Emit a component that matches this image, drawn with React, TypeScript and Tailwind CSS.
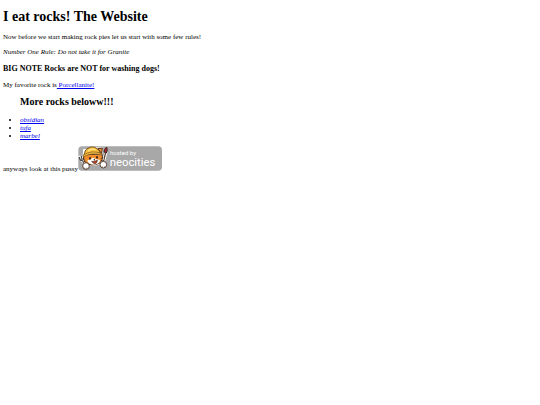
const rocks = ['obsidian', 'tufa', 'marbel']

function NeocitiesBadge() {
  return (
    <svg viewBox="0 0 252 75" className="h-[25px] w-[84px]" role="img" aria-label="hosted by neocities">
      <rect x="1" y="1" width="251" height="73" rx="11" fill="#a8a8a8" />

      {/* fork */}
      <g fill="none" strokeLinecap="round" strokeLinejoin="round">
        <path d="M5 33l5 9 8-8M12 42l10 15" stroke="#fff" strokeWidth="8" />
        <path d="M4 34q2 11 9 9q7-3 4-11M10 32l3 10l10 16" stroke="#454545" strokeWidth="4" />
      </g>

      {/* paintbrush */}
      <path d="M84 20L72 62" stroke="#fff" strokeWidth="9" strokeLinecap="round" />
      <path d="M83 20L73 60" stroke="#5b4635" strokeWidth="4" strokeLinecap="round" />
      <path d="M86 3q4 10-1 18l-7-3q0-9 8-15z" fill="#a3292c" stroke="#4b2422" strokeWidth="3" />

      {/* cat */}
      <path d="M16 25L17 10l14 2Q41-1 58 6l16-1-1 18q7 22-8 31-19 9-40 0-15-10-9-29z" fill="#fff" stroke="#fff" strokeWidth="3" />
      <path d="M18 26q-6 15 5 24 17 13 41 2 13-9 8-28z" fill="#f08d2c" stroke="#49301c" strokeWidth="3" />
      <path d="M44 35q-6 6-16 8 2 12 19 13 16 0 20-14-11-1-23-7z" fill="#fff" />
      <path d="M60 8l13-2-2 18z" fill="#f08d2c" stroke="#49301c" strokeWidth="3" strokeLinejoin="round" />
      <path d="M20 27q-2-14 10-20 15-9 27 1 9 6 10 14-21-7-47 5z" fill="#f7bd35" stroke="#79501e" strokeWidth="3" />
      <path d="M15 28q27-18 56-5l1 5q-29-11-56 5z" fill="#f8c340" stroke="#79501e" strokeWidth="2" />
      <path d="M29 16q9-9 24-5" stroke="#ffe486" strokeWidth="4" fill="none" />
      <ellipse cx="36" cy="37" rx="3" ry="4" fill="#38251d" />
      <ellipse cx="57" cy="34" rx="3" ry="4" fill="#38251d" />
      <path d="M46 39h6l-3 4z" fill="#38251d" />
      <path d="M41 46q5 2 8-2 5 3 9-2 0 10-7 11-6 0-10-7z" fill="#b94332" stroke="#49301c" strokeWidth="2" />
      <path d="M21 40l-8-2M22 45l-9 3M68 38l8-3M68 43l8 1" stroke="#49301c" strokeWidth="2" />

      {/* paws */}
      <circle cx="24" cy="60" r="10" fill="#fff" stroke="#554035" strokeWidth="3" />
      <circle cx="76" cy="56" r="10" fill="#fff" stroke="#554035" strokeWidth="3" />
      <path d="M20 65v3M26 65v3M73 61v3M79 61v3" stroke="#655047" strokeWidth="2" />

      <g fill="#fff" fontFamily="Roboto, Open Sans, sans-serif">
        <text x="96" y="27" fontSize="18">hosted by</text>
        <text x="95" y="59" fontSize="34">neocities</text>
      </g>
    </svg>
  )
}

export default function App() {
  return (
    <main className="bg-white px-[3px] pt-[9px] font-['Liberation_Serif',serif] text-[7px] leading-[8px] text-black">
      <h1 className="mb-2 text-[14px] leading-4 font-bold">I eat rocks! The Website</h1>
      <p className="mb-[7px]">Now before we start making rock pies let us start with some few rules!</p>
      <p className="mb-2 italic">Number One Rule: Do not take it for Granite</p>
      <h3 className="mb-2 text-[8px] leading-[9px] font-bold">BIG NOTE Rocks are NOT for washing dogs!</h3>
      <p className="mb-[7px]">
        My favorite rock is
        <a href="#porcellanite" className="text-[#0000ee] underline"> Porcellanite!</a>
      </p>
      <h2 className="mb-2 pl-[17px] text-[10px] leading-3 font-bold">More rocks beloww!!!</h2>
      <ul className="mb-[6px] list-disc pl-[17px]">
        {rocks.map((rock) => (
          <li key={rock}>
            <a href={`#${rock}`} className="text-[#0000ee] italic underline">{rock}</a>
          </li>
        ))}
      </ul>
      <div className="flex items-baseline">
        <span>anyways look at this pussy</span>
        <a href="#neocities">
          <NeocitiesBadge />
        </a>
      </div>
    </main>
  )
}
